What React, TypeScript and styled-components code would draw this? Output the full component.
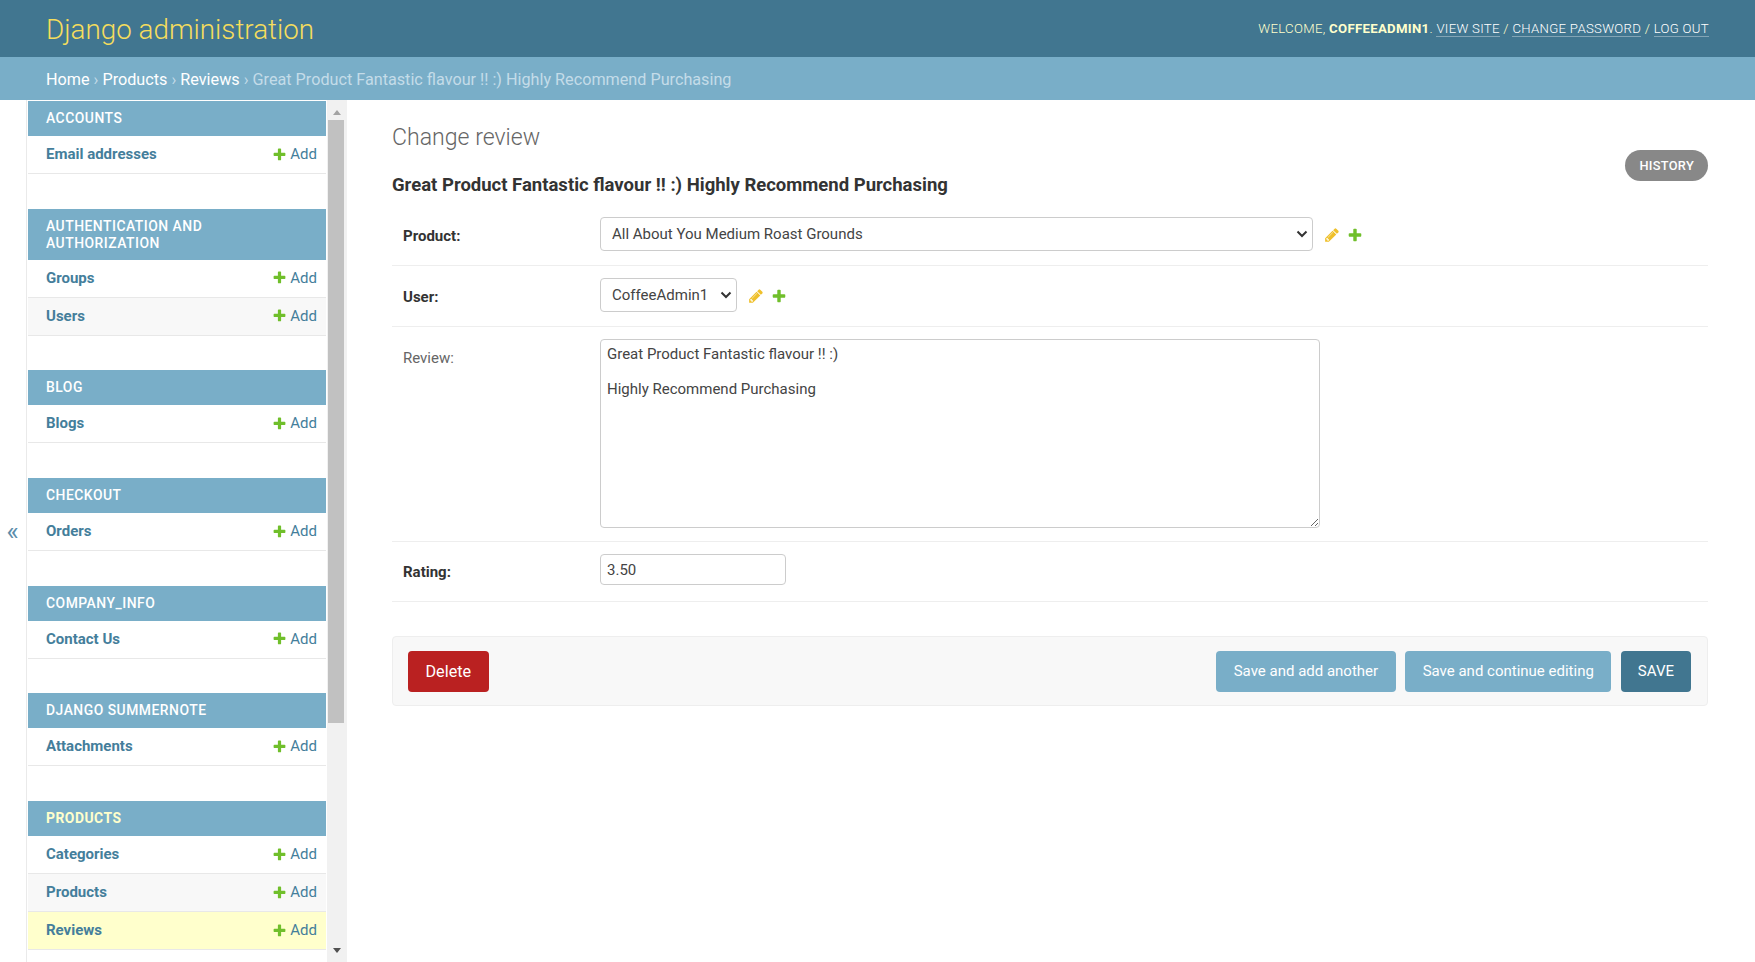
import React from 'react';
import styled, { createGlobalStyle } from 'styled-components';

const modules = [
  { name: 'Accounts', models: ['Email addresses'] },
  { name: 'Authentication and Authorization', models: ['Groups', 'Users'] },
  { name: 'Blog', models: ['Blogs'] },
  { name: 'Checkout', models: ['Orders'] },
  { name: 'Company_Info', models: ['Contact Us'] },
  { name: 'Django Summernote', models: ['Attachments'] },
  { name: 'Products', models: ['Categories', 'Products', 'Reviews'], current: 'Reviews' },
];

const chevron =
  "data:image/svg+xml,%3Csvg xmlns='http://www.w3.org/2000/svg' width='12' height='8' viewBox='0 0 12 8'%3E%3Cpath d='M1.5 1.5 6 6l4.5-4.5' fill='none' stroke='%23333' stroke-width='2'/%3E%3C/svg%3E";

const AddIcon = ({ size }: { size: number }) => (
  <svg width={size} height={size} viewBox="0 0 1792 1792">
    <path
      fill="#70bf2b"
      d="M1600 796v192q0 40-28 68t-68 28h-416v416q0 40-28 68t-68 28h-192q-40 0-68-28t-28-68v-416h-416q-40 0-68-28t-28-68v-192q0-40 28-68t68-28h416v-416q0-40 28-68t68-28h192q40 0 68 28t28 68v416h416q40 0 68 28t28 68z"
    />
  </svg>
);

const ChangeIcon = () => (
  <svg width={16} height={16} viewBox="0 0 1792 1792">
    <path
      fill="#efc02b"
      d="M491 1536l91-91-235-235-91 91v107h128v128h107zm523-928q0-22-22-22-10 0-17 7l-542 542q-7 7-7 17 0 22 22 22 10 0 17-7l542-542q7-7 7-17zm-54-192l416 416-832 832h-416v-416zm683 96q0 53-37 90l-166 166-416-416 166-165q36-38 90-38 53 0 91 38l235 234q37 39 37 91z"
    />
  </svg>
);

const RelatedLinks = () => (
  <Related>
    <ChangeIcon />
    <AddIcon size={16} />
  </Related>
);

const App = () => {
  return (
    <>
      <GlobalStyle />
      <Header>
        <Branding>Django administration</Branding>
        <UserTools>
          Welcome, <strong>CoffeeAdmin1</strong>. <ToolLink href="#">View site</ToolLink> /{' '}
          <ToolLink href="#">Change password</ToolLink> / <ToolLink href="#">Log out</ToolLink>
        </UserTools>
      </Header>
      <Breadcrumbs>
        <a href="#">Home</a> › <a href="#">Products</a> › <a href="#">Reviews</a> › Great Product
        Fantastic flavour !! :) Highly Recommend Purchasing
      </Breadcrumbs>
      <Body>
        <Toggle>«</Toggle>
        <ModuleList>
          {modules.map(m => (
            <Module key={m.name}>
              <ModuleTitle $current={!!m.current}>{m.name}</ModuleTitle>
              {m.models.map((model, i) => (
                <ModelRow key={model} $even={i % 2 === 1} $current={m.current === model}>
                  <ModelName href="#">{model}</ModelName>
                  <AddLink href="#">
                    <AddIcon size={15} />
                    Add
                  </AddLink>
                </ModelRow>
              ))}
            </Module>
          ))}
        </ModuleList>
        <Scrollbar>
          <ArrowUp />
          <Thumb />
          <ArrowDown />
        </Scrollbar>
        <Main>
          <HeadRow>
            <div>
              <Title>Change review</Title>
              <ObjectName>Great Product Fantastic flavour !! :) Highly Recommend Purchasing</ObjectName>
            </div>
            <History href="#">History</History>
          </HeadRow>
          <form>
            <FormRow>
              <FieldLabel $required>Product:</FieldLabel>
              <FieldLine>
                <ProductSelect defaultValue="1">
                  <option value="1">All About You Medium Roast Grounds</option>
                </ProductSelect>
                <RelatedLinks />
              </FieldLine>
            </FormRow>
            <FormRow>
              <FieldLabel $required>User:</FieldLabel>
              <FieldLine>
                <UserSelect defaultValue="1">
                  <option value="1">CoffeeAdmin1</option>
                </UserSelect>
                <RelatedLinks />
              </FieldLine>
            </FormRow>
            <ReviewRow>
              <FieldLabel>Review:</FieldLabel>
              <ReviewText
                defaultValue={'Great Product Fantastic flavour !! :)\n\nHighly Recommend Purchasing'}
              />
            </ReviewRow>
            <RatingRow>
              <FieldLabel $required>Rating:</FieldLabel>
              <RatingInput defaultValue="3.50" />
            </RatingRow>
            <SubmitRow>
              <DeleteButton href="#">Delete</DeleteButton>
              <ActionButton type="button">Save and add another</ActionButton>
              <ActionButton type="button">Save and continue editing</ActionButton>
              <ActionButton type="button" $primary>
                SAVE
              </ActionButton>
            </SubmitRow>
          </form>
        </Main>
      </Body>
    </>
  );
};

const GlobalStyle = createGlobalStyle`
  html, body {
    margin: 0;
    height: 100%;
    overflow: hidden;
    background: #fff;
  }
  body {
    font-family: Roboto, "Liberation Sans", sans-serif;
    font-size: 15px;
    color: #333;
  }
  * {
    box-sizing: border-box;
  }
`;

const Header = styled.header`
  display: flex;
  align-items: center;
  justify-content: space-between;
  height: 57px;
  padding: 0 46px 0 46px;
  background: #417690;
`;

const Branding = styled.div`
  margin-top: 2px;
  font-size: 27.8px;
  font-weight: 300;
  color: #f5dd5d;
`;

const UserTools = styled.div`
  font-size: 13.2px;
  font-weight: 300;
  letter-spacing: 0.3px;
  text-transform: uppercase;
  color: #ffc;

  strong {
    font-weight: 700;
  }
`;

const ToolLink = styled.a`
  color: #fff;
  text-decoration: none;
  border-bottom: 1px solid rgba(255, 255, 255, 0.35);
`;

const Breadcrumbs = styled.nav`
  display: flex;
  align-items: center;
  height: 43px;
  padding: 1px 0 0 46px;
  background: #79aec8;
  color: #c4dce8;
  font-size: 16.2px;
  white-space: pre;

  a {
    color: #fff;
    text-decoration: none;
  }
`;

const Body = styled.div`
  display: flex;
  height: 862px;
`;

const Toggle = styled.div`
  display: flex;
  flex: 0 0 27px;
  align-items: center;
  justify-content: center;
  padding-right: 1px;
  border-right: 1px solid #eaeaea;
  font-size: 26px;
  color: #5b8dab;
`;

const ModuleList = styled.div`
  flex: 0 0 300px;
  padding: 1px 1px 0 1px;
  overflow: hidden;
`;

const Module = styled.section`
  margin-bottom: 34.7px;
`;

const ModuleTitle = styled.h2<{ $current: boolean }>`
  margin: 0;
  padding: 9px 18px 8px;
  min-height: 35px;
  background: #79aec8;
  color: ${p => (p.$current ? '#ffffcc' : '#fff')};
  font-size: 13.9px;
  font-weight: ${p => (p.$current ? 700 : 500)};
  line-height: 17px;
  letter-spacing: 0.5px;
  text-transform: uppercase;
`;

const ModelRow = styled.div<{ $even: boolean; $current: boolean }>`
  display: flex;
  align-items: center;
  justify-content: space-between;
  height: 38px;
  padding: 0 9px 1px 18px;
  border-bottom: 1px solid #e8e8e8;
  background: ${p => (p.$current ? '#ffffcc' : p.$even ? '#f8f8f8' : '#fff')};
`;

const ModelName = styled.a`
  color: #447e9b;
  font-weight: 700;
  text-decoration: none;
`;

const AddLink = styled.a`
  display: flex;
  align-items: center;
  gap: 3.5px;
  color: #447e9b;
  text-decoration: none;
`;

const Scrollbar = styled.div`
  display: flex;
  flex: 0 0 20px;
  flex-direction: column;
  align-items: center;
  background: #f1f1f1;
`;

const ArrowUp = styled.div`
  margin: 10px 0 5px;
  border: 4.5px solid transparent;
  border-top: 0;
  border-bottom: 5px solid #a3a3a3;
`;

const ArrowDown = styled.div`
  margin-top: auto;
  margin-bottom: 9px;
  border: 4.5px solid transparent;
  border-bottom: 0;
  border-top: 5px solid #505050;
`;

const Thumb = styled.div`
  align-self: flex-start;
  width: 16px;
  height: 603px;
  margin-left: 1px;
  background: #c1c1c1;
`;

const Main = styled.main`
  flex: 1;
  padding: 23px 47px 0 45px;
`;

const HeadRow = styled.div`
  display: flex;
  align-items: flex-start;
  justify-content: space-between;
  margin-bottom: 8px;
`;

const Title = styled.h1`
  margin: 0 0 20px;
  font-size: 23.1px;
  font-weight: 300;
  line-height: 30px;
  color: #666;
`;

const ObjectName = styled.h2`
  margin: 0;
  font-size: 18.5px;
  font-weight: 700;
  line-height: 24px;
  color: #333;
`;

const History = styled.a`
  margin-top: 27px;
  padding: 0 14px;
  height: 31px;
  border-radius: 16px;
  background: #888;
  color: #fff;
  font-size: 12.8px;
  font-weight: 500;
  line-height: 31px;
  letter-spacing: 0.3px;
  text-transform: uppercase;
  text-decoration: none;
`;

const FormRow = styled.div`
  display: flex;
  align-items: center;
  padding: 12px 0 14px 11px;
  border-bottom: 1px solid #eee;
`;

const ReviewRow = styled(FormRow)`
  align-items: flex-start;
  padding-bottom: 13px;
`;

const RatingRow = styled(FormRow)`
  padding-bottom: 15.5px;
`;

const FieldLabel = styled.label<{ $required?: boolean }>`
  flex: 0 0 197px;
  padding-top: 4px;
  color: ${p => (p.$required ? '#333' : '#666')};
  font-weight: ${p => (p.$required ? 700 : 400)};

  ${ReviewRow} & {
    padding-top: 10px;
  }

  ${RatingRow} & {
    padding-top: 5px;
  }
`;

const FieldLine = styled.div`
  display: flex;
  align-items: center;
`;

const Related = styled.span`
  display: flex;
  align-items: center;
  gap: 7px;
  margin: 2px 0 0 11px;
`;

const BaseSelect = styled.select`
  height: 34px;
  padding: 0 24px 0 11px;
  border: 1px solid #ccc;
  border-radius: 4px;
  appearance: none;
  background: #fff url("${chevron}") no-repeat right 4px center;
  color: #444;
  font: 400 15px Roboto, sans-serif;
`;

const ProductSelect = styled(BaseSelect)`
  width: 713px;
`;

const UserSelect = styled(BaseSelect)`
  width: 137px;
`;

const ReviewText = styled.textarea`
  display: block;
  width: 720px;
  height: 189px;
  padding: 6px 6px;
  border: 1px solid #ccc;
  border-radius: 4px;
  color: #444;
  font: 400 15px/17.6px Roboto, sans-serif;
  resize: both;
`;

const RatingInput = styled.input`
  width: 186px;
  height: 31px;
  padding: 0 6px;
  border: 1px solid #ccc;
  border-radius: 4px;
  color: #444;
  font: 400 15px Roboto, sans-serif;
`;

const SubmitRow = styled.div`
  display: flex;
  align-items: center;
  gap: 9.5px;
  margin-top: 34.5px;
  padding: 13.5px 16px 13.5px 15px;
  border: 1px solid #eee;
  border-radius: 4px;
  background: #f8f8f8;
`;

const DeleteButton = styled.a`
  margin-right: auto;
  padding: 0 17.5px;
  height: 41px;
  border-radius: 4px;
  background: #ba2121;
  color: #fff;
  font-size: 16.2px;
  line-height: 41px;
  text-decoration: none;
`;

const ActionButton = styled.button<{ $primary?: boolean }>`
  height: 41px;
  padding: 0 ${p => (p.$primary ? 17 : 17.5)}px;
  border: 0;
  border-radius: 4px;
  background: ${p => (p.$primary ? '#417690' : '#79aec8')};
  color: #fff;
  font: 400 15px Roboto, sans-serif;
`;

export default App;
